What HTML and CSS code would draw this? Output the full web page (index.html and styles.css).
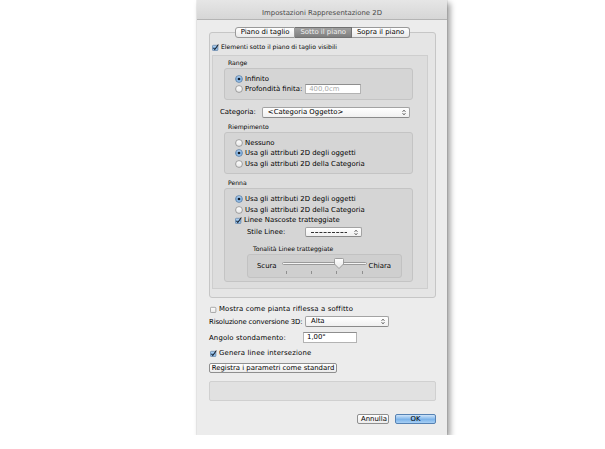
FILE: index.html
```html
<!DOCTYPE html>
<html lang="it">
<head>
  <meta charset="UTF-8">
  <meta name="viewport" content="width=device-width, initial-scale=1.0">
  <title>Impostazioni Rappresentazione 2D</title>

  <link rel="stylesheet" href="styles.css">
</head>
<body>
  <svg class="defs" width="0" height="0">
    <defs>
      <linearGradient id="blue" x1="0" y1="0" x2="0" y2="1">
        <stop offset="0" stop-color="#c9e0f7"/>
        <stop offset="0.5" stop-color="#7fb2e6"/>
        <stop offset="1" stop-color="#a9d0f5"/>
      </linearGradient>
      <linearGradient id="white" x1="0" y1="0" x2="0" y2="1">
        <stop offset="0" stop-color="#ffffff"/>
        <stop offset="1" stop-color="#e6e6e6"/>
      </linearGradient>
      <symbol id="cb-on" viewBox="0 0 8 8">
        <rect x="0.5" y="1.5" width="6.2" height="6" rx="1" fill="url(#blue)" stroke="#56789e" stroke-width="0.8"/>
        <path d="M1.7 4.5 3.2 6.3 7.3 0.5" fill="none" stroke="#151d27" stroke-width="1.2"/>
      </symbol>
      <symbol id="cb-off" viewBox="0 0 8 8">
        <rect x="0.5" y="1.5" width="6.2" height="6" rx="1" fill="url(#white)" stroke="#8a8a8a" stroke-width="0.8"/>
      </symbol>
      <symbol id="rb-on" viewBox="0 0 8 8">
        <circle cx="4" cy="4" r="3.4" fill="url(#blue)" stroke="#56789e" stroke-width="0.8"/>
        <circle cx="4" cy="4" r="1.3" fill="#151d27"/>
      </symbol>
      <symbol id="rb-off" viewBox="0 0 8 8">
        <circle cx="4" cy="4" r="3.4" fill="url(#white)" stroke="#8a8a8a" stroke-width="0.8"/>
      </symbol>
      <symbol id="arrows" viewBox="0 0 4 7">
        <path d="M0.6 2.8 2 1.2 3.4 2.8M0.6 4.2 2 5.8 3.4 4.2" fill="none" stroke="#333" stroke-width="0.8"/>
      </symbol>
    </defs>
  </svg>

  <div class="window">
    <div class="titlebar">Impostazioni Rappresentazione 2D</div>

    <div class="content">
      <div class="tabs">
        <span class="tab">Piano di taglio</span>
        <span class="tab active">Sotto il piano</span>
        <span class="tab">Sopra il piano</span>
      </div>

      <div class="tabbox">
        <div class="row">
          <svg class="check"><use href="#cb-on"/></svg>
          <span class="small">Elementi sotto il piano di taglio visibili</span>
        </div>

        <div class="inner">
          <div class="legend">Range</div>
          <div class="group">
            <div class="row">
              <svg class="radio"><use href="#rb-on"/></svg>
              <span>Infinito</span>
            </div>
            <div class="row">
              <svg class="radio"><use href="#rb-off"/></svg>
              <span>Profondità finita:</span>
              <span class="field depth">400,0cm</span>
            </div>
          </div>

          <div class="row category">
            <span>Categoria:</span>
            <span class="popup cat-popup">
              <span>&lt;Categoria Oggetto&gt;</span>
              <svg class="arrows"><use href="#arrows"/></svg>
            </span>
          </div>

          <div class="legend spaced">Riempimento</div>
          <div class="group">
            <div class="row">
              <svg class="radio"><use href="#rb-off"/></svg>
              <span>Nessuno</span>
            </div>
            <div class="row">
              <svg class="radio"><use href="#rb-on"/></svg>
              <span>Usa gli attributi 2D degli oggetti</span>
            </div>
            <div class="row">
              <svg class="radio"><use href="#rb-off"/></svg>
              <span>Usa gli attributi 2D della Categoria</span>
            </div>
          </div>

          <div class="legend spaced">Penna</div>
          <div class="group pen">
            <div class="row">
              <svg class="radio"><use href="#rb-on"/></svg>
              <span>Usa gli attributi 2D degli oggetti</span>
            </div>
            <div class="row">
              <svg class="radio"><use href="#rb-off"/></svg>
              <span>Usa gli attributi 2D della Categoria</span>
            </div>
            <div class="row">
              <svg class="check"><use href="#cb-on"/></svg>
              <span>Linee Nascoste tratteggiate</span>
            </div>
            <div class="row style-row">
              <span class="style-label">Stile Linee:</span>
              <span class="popup dash-popup">
                <svg class="dashes" viewBox="0 0 36 3"><line x1="0" y1="1.5" x2="36" y2="1.5" stroke="#333" stroke-width="1" stroke-dasharray="3 1.2"/></svg>
                <svg class="arrows"><use href="#arrows"/></svg>
              </span>
            </div>

            <div class="legend tone">Tonalità Linee tratteggiate</div>
            <div class="slider-box">
              <span>Scura</span>
              <div class="slider">
                <div class="track">
                  <svg class="thumb" viewBox="0 0 10 11">
                    <path d="M1.5 0.5h7a1 1 0 0 1 1 1v4.5l-4.5 4.5l-4.5-4.5v-4.5a1 1 0 0 1 1-1z" fill="url(#white)" stroke="#8d8d8d" stroke-width="0.8"/>
                  </svg>
                </div>
                <div class="ticks"><span></span><span></span><span></span><span></span></div>
              </div>
              <span>Chiara</span>
            </div>
          </div>
        </div>
      </div>

      <div class="row reflected">
        <svg class="check"><use href="#cb-off"/></svg>
        <span class="wide">Mostra come pianta riflessa a soffitto</span>
      </div>

      <div class="form">
        <span class="tight">Risoluzione conversione 3D:</span>
        <span class="popup res-popup">
          <span>Alta</span>
          <svg class="arrows"><use href="#arrows"/></svg>
        </span>
        <span class="wide">Angolo stondamento:</span>
        <span class="field angle">1,00°</span>
      </div>

      <div class="row intersect">
        <svg class="check"><use href="#cb-on"/></svg>
        <span class="wide">Genera linee intersezione</span>
      </div>

      <div class="actions-top">
        <button class="btn">Registra i parametri come standard</button>
      </div>

      <div class="status"></div>

      <div class="buttons">
        <button class="btn">Annulla</button>
        <button class="btn ok">OK</button>
      </div>
    </div>
  </div>
</body>
</html>
```

FILE: styles.css
```css
body {
  margin: 0;
  background: #fff;
  font-family: "DejaVu Sans", sans-serif;
  font-size: 6.9px;
  line-height: 10px;
  color: #000;
  white-space: nowrap;
}

.defs {
  position: absolute;
  width: 0;
  height: 0;
}

.small {
  font-size: 6.1px;
}

.wide {
  letter-spacing: 0.15px;
}

.tight {
  letter-spacing: -0.15px;
}

.window {
  width: 250px;
  height: 435px;
  margin-left: 197px;
  background: #ececec;
  box-shadow: 0 0 1px rgba(0, 0, 0, 0.35), 3px 3px 6px rgba(0, 0, 0, 0.4);
  display: flex;
  flex-direction: column;
}

.titlebar {
  box-sizing: border-box;
  height: 20px;
  padding-top: 8px;
  text-align: center;
  color: #4a4a4a;
  background: linear-gradient(#e6e6e6, #d6d6d6);
  border-bottom: 1px solid #b4b4b4;
}

.content {
  padding: 7px 11px 10px 12px;
  display: flex;
  flex-direction: column;
}

/* tabs */
.tabs {
  display: flex;
  justify-content: center;
  height: 11px;
  position: relative;
  z-index: 1;
}

.tab {
  box-sizing: border-box;
  height: 11px;
  line-height: 9px;
  padding: 0 5px;
  border: 1px solid #999;
  border-left: 0;
  background: linear-gradient(#ffffff, #e9e9e9);
}

.tab:first-child {
  border-left: 1px solid #999;
  border-radius: 3px 0 0 3px;
}

.tab:last-child {
  border-radius: 0 3px 3px 0;
}

.tab.active {
  color: #f2f2f2;
  background: linear-gradient(#a0a0a0, #7f7f7f);
  border-color: #717171;
}

.tabbox {
  margin-top: -6px;
  padding: 9px 7px 8px 2px;
  border: 1px solid #c6c6c6;
  border-radius: 3px;
  background: #e5e5e5;
}

.inner {
  margin-top: 2px;
  padding: 2px 10px 6px 7px;
  border: 1px solid #cecece;
  background: #dddddd;
}

.legend {
  padding-left: 8px;
  height: 10px;
  font-size: 6.1px;
}

.legend.spaced {
  margin-top: 4px;
}

.group {
  margin: 0 4px;
  padding: 5px 0 4px 10px;
  border: 1px solid #c4c4c4;
  border-radius: 3px;
  background: #d5d5d5;
}

.row {
  display: flex;
  align-items: center;
  gap: 2px;
  height: 10.5px;
}

.check {
  width: 7px;
  height: 7px;
  flex: none;
}

.radio {
  width: 8px;
  height: 8px;
  flex: none;
}

.field {
  box-sizing: border-box;
  height: 10px;
  line-height: 8px;
  padding: 0 3px;
  background: #fff;
  border: 1px solid #b3b3b3;
  border-top-color: #8e8e8e;
}

.depth {
  width: 56px;
  margin-left: 1px;
  color: #a8a8a8;
}

.popup {
  box-sizing: border-box;
  height: 11px;
  line-height: 9px;
  padding: 0 3px 0 5px;
  display: flex;
  align-items: center;
  justify-content: space-between;
  background: linear-gradient(#ffffff, #f0f0f0);
  border: 1px solid #a3a3a3;
  border-bottom-color: #8a8a8a;
  border-radius: 2px;
}

.arrows {
  width: 4px;
  height: 7px;
}

.category {
  margin-top: 7px;
  height: 11px;
  gap: 6px;
}

.cat-popup {
  width: 148px;
}

.pen {
  padding-bottom: 3px;
}

.style-row {
  margin-top: 1.5px;
  height: 10px;
  gap: 0;
}

.style-label {
  width: 58px;
  padding-left: 12px;
}

.dash-popup {
  width: 57px;
  height: 10px;
}

.dashes {
  width: 36px;
  height: 3px;
}

.legend.tone {
  margin-top: 7px;
  padding-left: 18px;
}

.slider-box {
  box-sizing: border-box;
  width: 155px;
  height: 24px;
  margin-left: 12px;
  padding-left: 9px;
  display: flex;
  align-items: center;
  border: 1px solid #c2c2c2;
  border-radius: 3px;
  background: #cfcfcf;
}

.slider {
  width: 85px;
  margin: 4px 2px 0 5px;
  display: flex;
  flex-direction: column;
}

.track {
  box-sizing: border-box;
  height: 3px;
  position: relative;
  border: 1px solid #9a9a9a;
  border-radius: 2px;
  background: #f4f4f4;
}

.thumb {
  position: absolute;
  left: 51px;
  top: -5px;
  width: 10px;
  height: 11px;
}

.ticks {
  display: flex;
  justify-content: space-between;
  margin-top: 6px;
  padding: 0 4px;
}

.ticks span {
  width: 1px;
  height: 3px;
  background: #8f8f8f;
}

/* lower part */
.reflected {
  margin-top: 6px;
  height: 10px;
  padding-left: 1px;
}

.form {
  margin-top: 2px;
  display: grid;
  grid-template-columns: 94px auto;
  row-gap: 5px;
  align-items: center;
  justify-items: start;
}

.res-popup {
  width: 84px;
  margin-left: 2px;
}

.angle {
  width: 54px;
  height: 11px;
  line-height: 9px;
}

.intersect {
  margin-top: 5px;
  height: 10px;
  padding-left: 1px;
}

.actions-top {
  margin-top: 5px;
  display: flex;
}

.btn {
  box-sizing: border-box;
  height: 10px;
  margin: 0;
  padding: 0 3px;
  font-family: inherit;
  font-size: 6.9px;
  line-height: 8px;
  color: #000;
  background: linear-gradient(#ffffff, #ececec);
  border: 1px solid #8f8f8f;
  border-radius: 2px;
}

.actions-top .btn {
  width: 128px;
  padding: 0;
}

.status {
  margin-top: 8px;
  height: 20px;
  box-sizing: border-box;
  border: 1px solid #d0d0d0;
  border-radius: 2px;
  background: #e1e1e1;
}

.buttons {
  margin-top: 13px;
  display: flex;
  justify-content: flex-end;
  gap: 6px;
}

.buttons .btn {
  width: 32px;
}

.buttons .ok {
  width: 41px;
  background: linear-gradient(#cfe4f9, #7db4ea 55%, #a7cff5);
  border-color: #5682b3;
}
```
